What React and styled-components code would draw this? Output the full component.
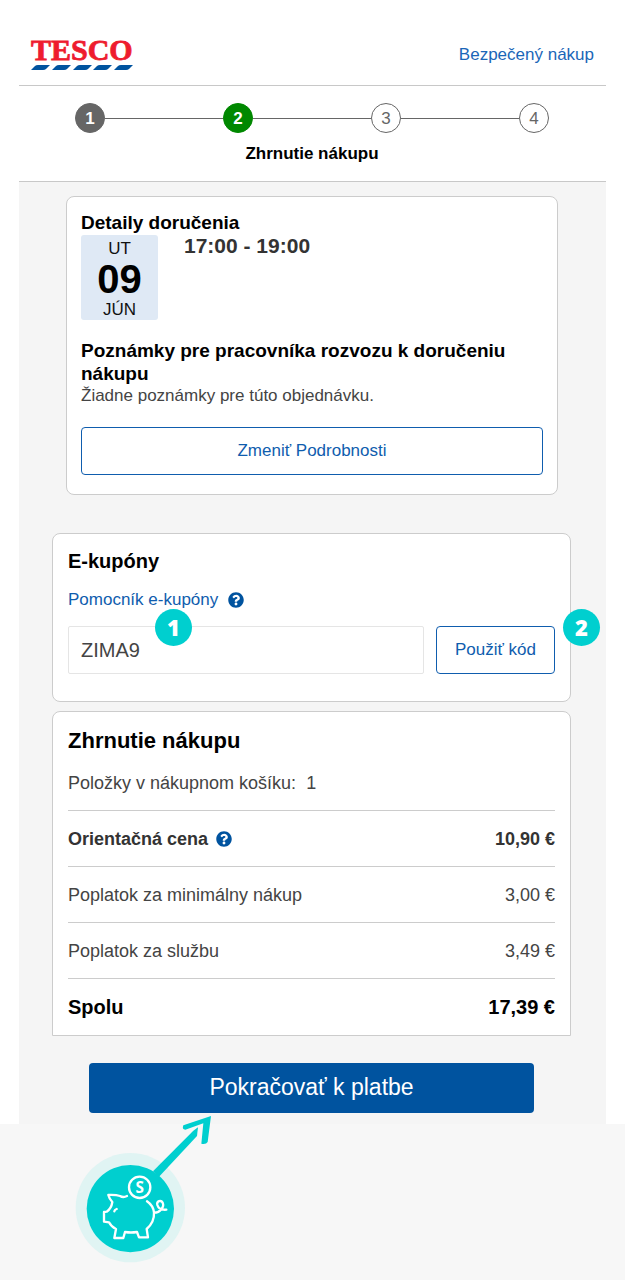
import React, { useState } from 'react'
import styled, { createGlobalStyle } from 'styled-components'
import { FaQuestionCircle } from 'react-icons/fa'

const GlobalStyle = createGlobalStyle`
  * {
    box-sizing: border-box;
  }

  body {
    margin: 0;
    background: #fff;
    color: #333;
    font-family: 'Liberation Sans', Arial, sans-serif;
    font-size: 17px;
    line-height: 22px;
  }

  button,
  input {
    font-family: inherit;
  }
`

const Page = styled.div`
  display: flex;
  flex-direction: column;
  min-height: 100vh;
`

const Header = styled.header`
  display: flex;
  justify-content: space-between;
  align-items: center;
  margin: 0 19px;
  padding: 24px 12px 0;
  height: 86px;
  border-bottom: 1px solid #c8c8c8;
`

const SecureLink = styled.a`
  color: #1a66b8;
  text-decoration: none;
`

const Steps = styled.nav`
  margin: 0 19px;
  padding: 17px 57px 16px 56px;
  border-bottom: 1px solid #c8c8c8;
`

const StepList = styled.ol`
  display: flex;
  align-items: center;
  margin: 0;
  padding: 0;
  list-style: none;
`

const Step = styled.li`
  display: flex;
  align-items: center;
  flex: ${({ $first }) => ($first ? 'none' : 1)};

  &::before {
    content: '';
    display: ${({ $first }) => ($first ? 'none' : 'block')};
    flex: 1;
    height: 1px;
    background: #666;
  }
`

const StepNumber = styled.span`
  width: 30px;
  height: 30px;
  border: 1px solid ${({ $color }) => $color || '#666'};
  border-radius: 50%;
  background: ${({ $color }) => $color || '#fff'};
  color: ${({ $color }) => ($color ? '#fff' : '#666')};
  font-weight: ${({ $color }) => ($color ? 'bold' : 'normal')};
  line-height: 30px;
  text-align: center;
`

const StepTitle = styled.div`
  margin-top: 10px;
  color: #000;
  font-weight: bold;
  text-align: center;
`

const Main = styled.main`
  margin: 0 19px;
  padding: 14px 35px 11px 33px;
  background: #f5f5f5;
`

const Card = styled.section`
  margin: ${({ $margin }) => $margin || '0'};
  padding: ${({ $padding }) => $padding || '15px'};
  border: 1px solid #ccc;
  border-radius: ${({ $open }) => ($open ? '8px 8px 0 0' : '8px')};
  background: #fff;
`

const Heading = styled.h2`
  margin: 0;
  color: #000;
  font-size: ${({ $size }) => $size || 19}px;
  line-height: ${({ $line }) => $line || 23}px;
`

const Slot = styled.div`
  display: flex;
  gap: 26px;
  margin: 1px 0 19px;
`

const DateBox = styled.time`
  display: flex;
  flex-direction: column;
  align-items: center;
  width: 77px;
  height: 85px;
  padding-top: 4px;
  border-radius: 3px;
  background: #dfe9f5;
  color: #111;
  line-height: 19px;
`

const Day = styled.strong`
  color: #000;
  font-size: 40px;
  line-height: 42px;
`

const SlotTime = styled.strong`
  font-size: 21px;
`

const Note = styled.p`
  margin: 0;
  color: #444;
`

const OutlineButton = styled.button`
  height: 48px;
  padding: 0 18px;
  border: 1px solid #0f5dae;
  border-radius: 4px;
  background: #fff;
  color: #0f5dae;
  font-size: 17px;
  white-space: nowrap;
`

const WideButton = styled(OutlineButton)`
  width: 100%;
  margin-top: 20px;
`

const HelpLink = styled.a`
  display: flex;
  align-items: center;
  gap: 10px;
  margin: 16px 0 15px;
  color: #0f5dae;
  text-decoration: none;
`

const HelpIcon = styled(FaQuestionCircle)`
  width: 16px;
  height: 16px;
  color: #00539f;
`

const CouponForm = styled.form`
  position: relative;
  display: flex;
  gap: 12px;
`

const CouponInput = styled.input`
  flex: 1;
  min-width: 0;
  height: 48px;
  padding: 0 12px;
  border: 1px solid #e5e5e5;
  border-radius: 2px;
  color: #444;
  font-size: 20px;
  outline: none;
`

const Badge = styled.span`
  position: absolute;
  top: -17px;
  ${({ $side, $offset }) => `${$side}: ${$offset}px;`}
  width: 37px;
  height: 37px;
  border-radius: 50%;
  background: #00cfcf;
  color: #fff;
  font: 800 22px/36px 'Open Sans', sans-serif;
  text-align: center;
`

const ItemCount = styled.p`
  display: flex;
  gap: 10px;
  margin: 17px 0 16px;
  color: #444;
  font-size: 18px;
`

const Prices = styled.table`
  width: 100%;
  border-collapse: collapse;
`

const PriceRow = styled.tr`
  height: 56px;
  border-top: 1px solid #ccc;
  color: ${({ $total, $bold }) => ($total ? '#000' : $bold ? '#333' : '#444')};
  font-size: ${({ $total }) => ($total ? 20 : 18)}px;
  font-weight: ${({ $bold }) => ($bold ? 'bold' : 'normal')};

  th,
  td {
    padding: 0;
    font-weight: inherit;
    text-align: left;
  }

  td {
    text-align: right;
  }
`

const PriceLabel = styled.span`
  display: flex;
  align-items: center;
  gap: 8px;
`

const PayButton = styled.button`
  display: block;
  width: calc(100% - 74px);
  height: 50px;
  margin: 27px 37px 0;
  border: none;
  border-radius: 4px;
  background: #00539f;
  color: #fff;
  font-size: 23px;
`

const Footer = styled.footer`
  position: relative;
  flex: 1;
  min-height: 156px;
  background: #f7f7f7;
`

const SavingsArt = styled.svg`
  position: absolute;
  top: -11px;
  left: 74px;
  width: 140px;
  height: 150px;
`

const steps = [
  { id: 1, color: '#666' },
  { id: 2, color: '#008800' },
  { id: 3 },
  { id: 4 }
]

const prices = [
  { label: 'Orientačná cena', value: '10,90 €', bold: true, help: true },
  { label: 'Poplatok za minimálny nákup', value: '3,00 €' },
  { label: 'Poplatok za službu', value: '3,49 €' },
  { label: 'Spolu', value: '17,39 €', bold: true, total: true }
]

const Logo = () => (
  <svg width="108" height="48" viewBox="0 -8 108 48" overflow="visible" role="img" aria-label="Tesco">
    <text
      x="0"
      y="21"
      fill="#ee1c2e"
      stroke="#ee1c2e"
      strokeWidth="0.8"
      fontFamily="Liberation Serif, serif"
      fontWeight="bold"
      fontSize="30"
    >
      TESCO
    </text>
    {[0, 21, 42, 62, 83].map(x => (
      <path key={x} d={`M${x} 31 L${x + 4} 27 Q${x + 5} 26 ${x + 7} 26 H${x + 19} L${x + 15} 30 Q${x + 14} 31 ${x + 12} 31 Z`} fill="#00539f" />
    ))}
  </svg>
)

const PiggyBank = () => (
  <SavingsArt viewBox="42 189 420 450" fill="none" aria-hidden="true">
    <circle cx="211" cy="473" r="164" fill="#e0f4f3" />
    <circle cx="211" cy="476" r="131" fill="#00cfcf" />
    <path d="M279 364 L400 242 L414 232 L411 258 L297 380 Z" fill="#00cfcf" />
    <path d="M370 226 L453 198 L443 276 Q438 284 424 281 L430 220 L376 239 Q365 239 370 226 Z" fill="#00cfcf" />
    <g stroke="#fff" strokeWidth="7" strokeLinecap="round" strokeLinejoin="round">
      <path d="M201 438 Q190 444 180 438 Q168 434 145 435 Q148 447 157 456 Q154 476 140 485 L132 486 V515 L147 517 Q154 531 168 537 L163 564 H190 L195 546 Q213 549 231 546 L237 562 H264 L260 537 C275 524 283 505 282 488 Q280 467 261 454" />
      <path d="M283 488 C300 488 314 470 308 458 C303 449 289 453 292 465 Q297 481 319 479" />
      <path d="M163 484 Q164 479 170 477" />
      <circle cx="239" cy="412" r="32" />
    </g>
    <text
      x="239"
      y="428"
      fill="#fff"
      fontFamily="Open Sans, sans-serif"
      fontWeight="bold"
      fontSize="46"
      textAnchor="middle"
    >
      S
    </text>
  </SavingsArt>
)

const App = () => {
  const [code, setCode] = useState('ZIMA9')

  return (
    <Page>
      <GlobalStyle />
      <Header>
        <Logo />
        <SecureLink href="#secure">Bezpečený nákup</SecureLink>
      </Header>
      <Steps>
        <StepList>
          {steps.map(({ id, color }) => (
            <Step key={id} $first={id === 1}>
              <StepNumber $color={color}>{id}</StepNumber>
            </Step>
          ))}
        </StepList>
        <StepTitle>Zhrnutie nákupu</StepTitle>
      </Steps>
      <Main>
        <Card $margin="0 13px 38px 14px" $padding="14px 14px 19px">
          <Heading>Detaily doručenia</Heading>
          <Slot>
            <DateBox>
              <span>UT</span>
              <Day>09</Day>
              <span>JÚN</span>
            </DateBox>
            <SlotTime>17:00 - 19:00</SlotTime>
          </Slot>
          <Heading>Poznámky pre pracovníka rozvozu k doručeniu nákupu</Heading>
          <Note>Žiadne poznámky pre túto objednávku.</Note>
          <WideButton type="button">Zmeniť Podrobnosti</WideButton>
        </Card>
        <Card $margin="0 0 9px" $padding="15px 15px 27px">
          <Heading $size={20} $line={24}>
            E-kupóny
          </Heading>
          <HelpLink href="#coupons">
            Pomocník e-kupóny <HelpIcon />
          </HelpLink>
          <CouponForm onSubmit={e => e.preventDefault()}>
            <CouponInput
              type="text"
              aria-label="E-kupón"
              value={code}
              onChange={({ target: { value } }) => setCode(value)}
            />
            <OutlineButton type="submit">Použiť kód</OutlineButton>
            <Badge $side="left" $offset={87}>
              1
            </Badge>
            <Badge $side="right" $offset={-45}>
              2
            </Badge>
          </CouponForm>
        </Card>
        <Card $open $padding="15px 15px 0">
          <Heading $size={22} $line={28}>
            Zhrnutie nákupu
          </Heading>
          <ItemCount>
            <span>Položky v nákupnom košíku:</span>
            <span>1</span>
          </ItemCount>
          <Prices>
            <tbody>
              {prices.map(({ label, value, bold, help, total }) => (
                <PriceRow key={label} $bold={bold} $total={total}>
                  <th scope="row">
                    <PriceLabel>
                      {label} {help && <HelpIcon />}
                    </PriceLabel>
                  </th>
                  <td>{value}</td>
                </PriceRow>
              ))}
            </tbody>
          </Prices>
        </Card>
        <PayButton type="button">Pokračovať k platbe</PayButton>
      </Main>
      <Footer>
        <PiggyBank />
      </Footer>
    </Page>
  )
}

export default App
